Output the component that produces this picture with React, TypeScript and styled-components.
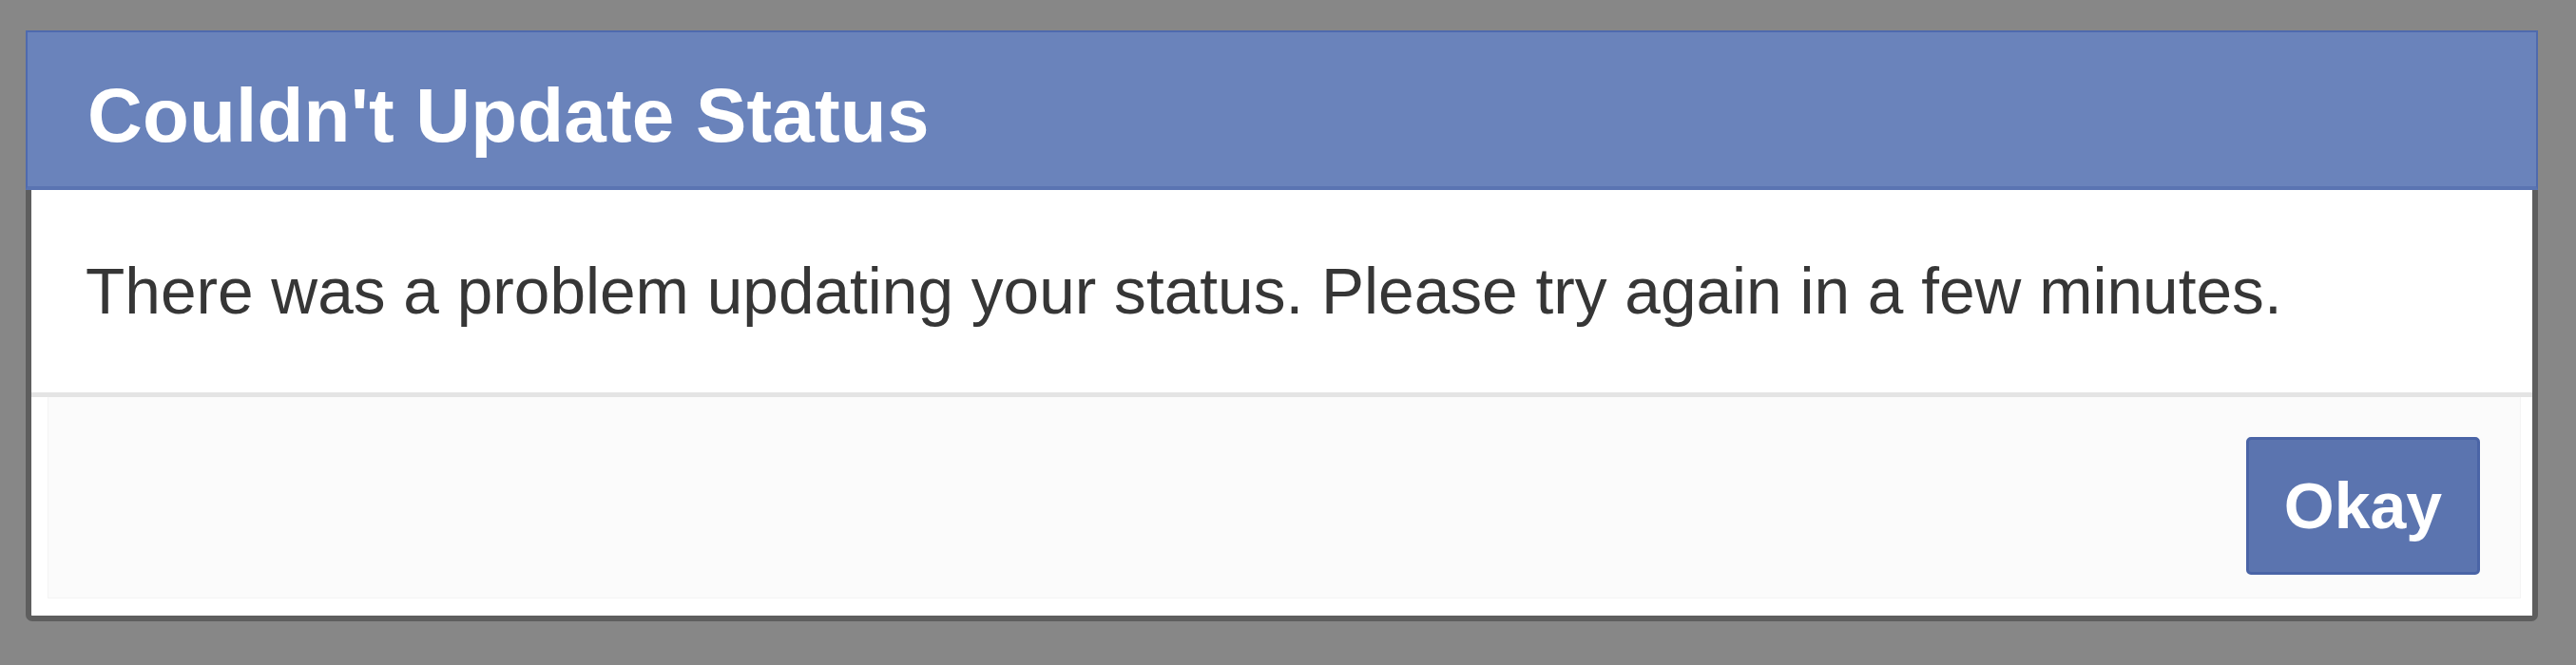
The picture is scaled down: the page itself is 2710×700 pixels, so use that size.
import styled, { createGlobalStyle } from 'styled-components'

const GlobalStyle = createGlobalStyle`
  html,
  body {
    margin: 0;
    padding: 0;
    background: #878787;
  }
  body {
    font-family: 'Liberation Sans', Arial, Helvetica, sans-serif;
  }
`

export default function App() {
  return (
    <Page>
      <GlobalStyle />
      <Dialog role="dialog" aria-labelledby="dialog-title">
        <Header>
          <Title id="dialog-title">Couldn't Update Status</Title>
        </Header>

        <Body>
          <Message>
            There was a problem updating your status. Please try again in a few minutes.
          </Message>
        </Body>

        <Footer>
          <Button type="button">Okay</Button>
        </Footer>
      </Dialog>
    </Page>
  )
}

const Page = styled.div`
  width: 2710px;
  height: 700px;
  box-sizing: border-box;
  padding: 32px 40px 0 27px;
  display: flex;
  align-items: flex-start;
`

const Dialog = styled.section`
  width: 2643px;
  box-sizing: border-box;
  display: flex;
  flex-direction: column;
  background: #fff;
  border: 6px solid #5e5e5e;
  border-top: 0;
  border-radius: 0 0 7px 7px;
`

const Header = styled.header`
  height: 168px;
  margin: 0 -6px;
  box-sizing: border-box;
  display: flex;
  align-items: center;
  padding: 14px 0 0 63px;
  background: #6a83bb;
  border: 2px solid #4f6aae;
  border-bottom: 4px solid #5a74b2;
`

const Title = styled.h1`
  margin: 0;
  font-size: 80px;
  font-weight: 700;
  color: #fff;
  letter-spacing: 0.2px;
`

const Body = styled.div`
  height: 218px;
  box-sizing: border-box;
  display: flex;
  align-items: center;
  padding: 0 0 0 57px;
  border-bottom: 5px solid #e4e4e4;
`

const Message = styled.p`
  margin: 0;
  font-size: 67.6px;
  color: #363636;
`

const Footer = styled.footer`
  height: 212px;
  box-sizing: border-box;
  display: flex;
  align-items: center;
  justify-content: flex-end;
  padding: 17px 42px 0 0;
  background: #fbfbfb;
  border: 1px solid #f4f4f4;
  border-top: 0;
  margin: 0 12px 18px 17px;
`

const Button = styled.button`
  width: 246px;
  height: 145px;
  box-sizing: border-box;
  border: 3px solid #4a64a6;
  border-radius: 5px;
  background: #5b74af;
  color: #fff;
  font-family: 'Liberation Sans', Arial, Helvetica, sans-serif;
  font-size: 68px;
  font-weight: 700;
  cursor: pointer;
  padding: 0;
`
